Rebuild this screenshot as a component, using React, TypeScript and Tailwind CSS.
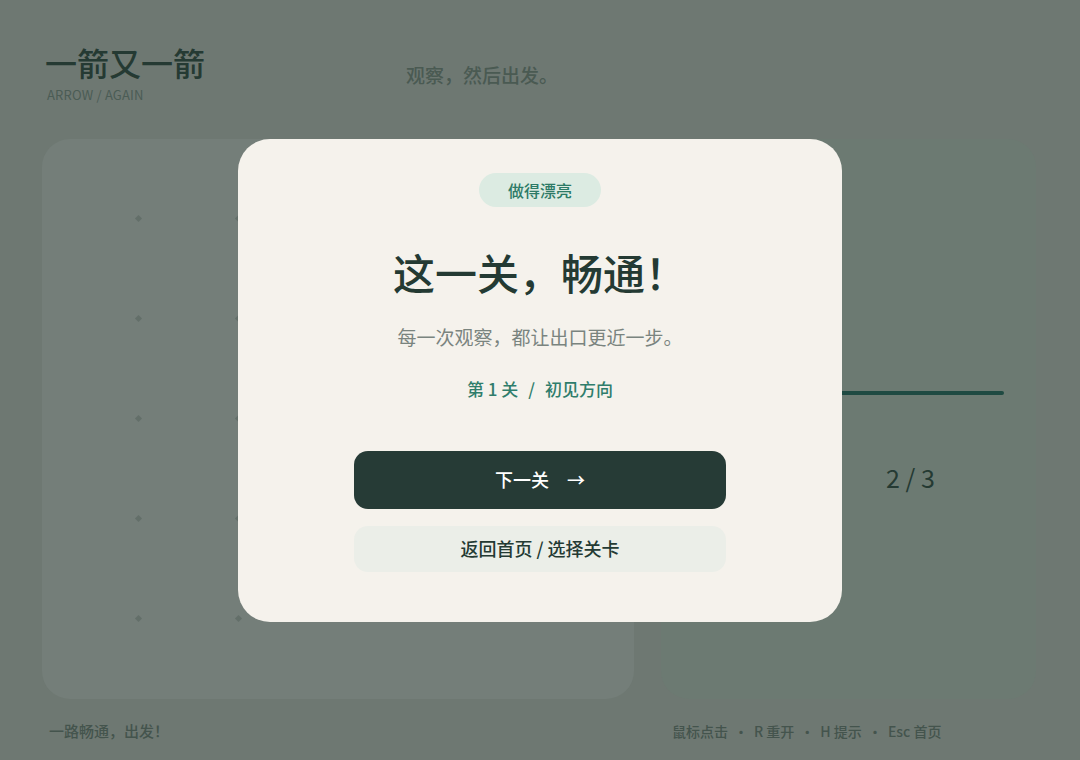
import React from "react";

const font = { fontFamily: '"Noto Sans CJK SC", "Noto Sans", sans-serif' };

export default function App() {
  const dots = Array.from({ length: 25 });
  return (
    <div className="relative w-[1080px] h-[760px] overflow-hidden bg-[#6e7872]" style={font}>
      {/* header */}
      <div className="flex items-start pl-[45px] pt-[40px] h-[139px]">
        <div className="w-[361px]">
          <div className="text-[32px] leading-[44px] font-medium text-[#253a33]">一箭又一箭</div>
          <div className="text-[13px] leading-[18px] text-[#4b5c55] pl-[2px] mt-[2px] tracking-[0.2px]">ARROW / AGAIN</div>
        </div>
        <div className="text-[19px] leading-[28px] font-medium text-[#4a5a52] mt-[21px]">观察，然后出发。</div>
      </div>

      {/* cards */}
      <div className="flex gap-[27px] pl-[42px]">
        <div className="w-[592px] h-[560px] rounded-[28px] bg-[#747e79] flex items-center justify-center pb-[2px]">
          <div className="grid grid-cols-5 grid-rows-5 w-[500px] h-[500px]">
            {dots.map((_, i) => (
              <div key={i} className="flex items-center justify-center">
                <div className="w-[5px] h-[5px] rotate-45 bg-[#636f69]" />
              </div>
            ))}
          </div>
        </div>
        <div className="w-[375px] h-[560px] rounded-[28px] bg-[#6c7a72] px-[32px] pt-[252px]">
          <div className="h-[4px] w-[311px] rounded-full bg-[#1f4a42]" />
          <div className="flex mt-[65px]">
            <div className="w-[193px]" />
            <div className="text-[25px] leading-[34px] text-[#253a33]">2 / 3</div>
          </div>
        </div>
      </div>

      {/* footer */}
      <div className="flex items-center h-[63px] pl-[49px] pt-[2px]">
        <div className="w-[623px] text-[15px] font-medium text-[#44544d]">一路畅通，出发！</div>
        <div className="flex items-center gap-[6px] text-[14px] font-medium text-[#44544d]">
          <span>鼠标点击</span>
          <span>·</span>
          <span>R 重开</span>
          <span>·</span>
          <span>H 提示</span>
          <span>·</span>
          <span>Esc 首页</span>
        </div>
      </div>

      {/* modal */}
      <div className="absolute inset-0 flex items-center justify-center">
        <div className="w-[604px] h-[483px] rounded-[32px] bg-[#f5f2ec] flex flex-col items-center pt-[34px]">
          <div className="h-[34px] px-[29px] rounded-full bg-[#dcebe2] text-[16px] font-medium text-[#2d7a66] flex items-center">
            做得漂亮
          </div>
          <div className="mt-[41px] text-[42px] leading-[48px] font-medium text-[#243a33]">这一关，畅通！</div>
          <div className="mt-[28px] text-[19px] leading-[26px] text-[#7a847f]">每一次观察，都让出口更近一步。</div>
          <div className="mt-[27px] flex items-center gap-[10px] text-[17px] leading-[24px] font-medium text-[#2f7d6b]">
            <span>第 1 关</span>
            <span>/</span>
            <span>初见方向</span>
          </div>
          <div className="mt-[50px] w-[372px] h-[58px] rounded-[14px] bg-[#263b36] flex items-center justify-center text-[18px] font-medium text-white">
            <span>下一关</span>
            <span className="ml-[18px]">→</span>
          </div>
          <div className="mt-[17px] w-[372px] h-[46px] rounded-[14px] bg-[#ebeee8] flex items-center justify-center text-[18px] font-medium text-[#243a33]">
            返回首页 / 选择关卡
          </div>
        </div>
      </div>
    </div>
  );
}
